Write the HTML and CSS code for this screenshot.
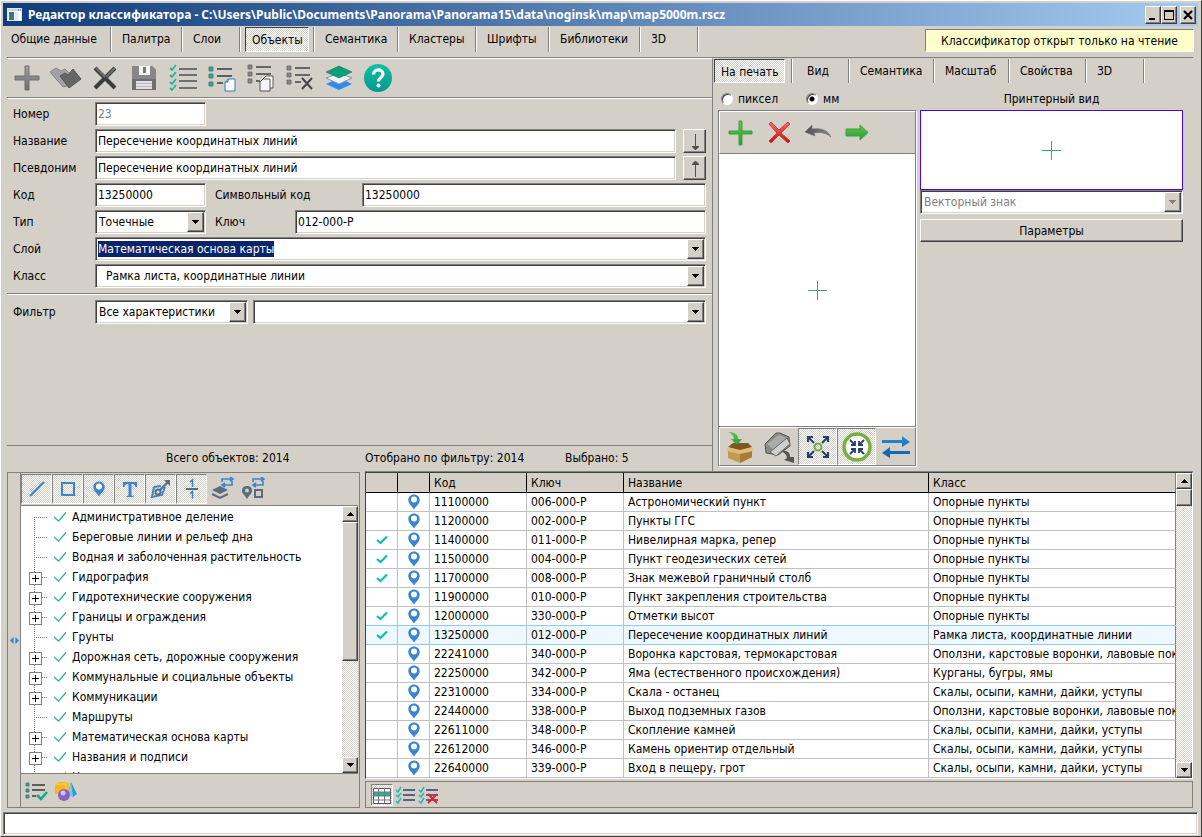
FILE: index.html
```html
<!DOCTYPE html>
<html lang="ru">
<head>
<meta charset="utf-8">
<title>Редактор классификатора</title>
<link rel="stylesheet" href="styles.css">
<script src="main.js" defer></script>
</head>
<body>
<svg class="defs" aria-hidden="true">
  <defs>
    <linearGradient id="gGreen" x1="0" y1="0" x2="0" y2="1"><stop offset="0" stop-color="#62c258"/><stop offset="1" stop-color="#2f9a35"/></linearGradient>
    <linearGradient id="gRed" x1="0" y1="0" x2="0" y2="1"><stop offset="0" stop-color="#f4716c"/><stop offset="1" stop-color="#c00d12"/></linearGradient>
    <linearGradient id="gGray" x1="0" y1="0" x2="0" y2="1"><stop offset="0" stop-color="#a0a0a0"/><stop offset="1" stop-color="#6c6c6c"/></linearGradient>
    <linearGradient id="gDark" x1="0" y1="0" x2="1" y2="0"><stop offset="0" stop-color="#505050"/><stop offset="1" stop-color="#888"/></linearGradient>
    <linearGradient id="gTeal" x1="0" y1="0" x2="0" y2="1"><stop offset="0" stop-color="#10c0a8"/><stop offset="1" stop-color="#04988f"/></linearGradient>
    <linearGradient id="gBlue" x1="0" y1="0" x2="0" y2="1"><stop offset="0" stop-color="#2a8ad8"/><stop offset="1" stop-color="#0b5ea8"/></linearGradient>
    <symbol id="arrowDown" viewBox="0 0 7 4"><path d="M0 0h7v1h-1v1h-1v1h-1v1h-1v-1h-1v-1h-1v-1h-1z"/></symbol>
    <symbol id="arrowUp" viewBox="0 0 7 4"><path d="M0 4h7v-1h-1v-1h-1v-1h-1v-1h-1v1h-1v1h-1v1h-1z"/></symbol>
    <symbol id="pin" viewBox="0 0 12 16"><path d="M6 .5C3 .5.3 2.800.3 6c0 2.600 1.700 4.400 3.200 6.300C4.500 13.500 5.200 14.300 6 15.600c.8-1.300 1.500-2.100 2.500-3.300 1.500-1.900 3.200-3.700 3.200-6.300C11.700 2.800 9 .5 6 .5z" fill="#3a84d0"/><circle cx="6" cy="5.500" r="3" fill="#fff"/></symbol>
    <symbol id="tick" viewBox="0 0 12 10"><path d="M1 5l3.500 3L11 1.500" fill="none" stroke="#0fbfa5" stroke-width="2.200"/></symbol>
    <symbol id="thinTick" viewBox="0 0 14 12"><path d="M1 6l4.500 4L13 1.500" fill="none" stroke="#3fb595" stroke-width="1.400"/></symbol>
  </defs>
</svg>

<div class="window">
  <header class="titlebar">
    <svg class="app-icon" viewBox="0 0 16 16"><rect x=".5" y="1.500" width="14" height="12" fill="#fff" stroke="#dfe6ee"/><rect x="1" y="2" width="13" height="2" fill="#c8d4e0"/><rect x="2" y="5" width="5" height="8" fill="#2a8a68"/><path d="M2 5h5v4l-5 3z" fill="#366fa0"/><rect x="8" y="5" width="3" height="8" fill="#e6e6e6"/><path d="M11 3h1M13 3h1" stroke="#555"/></svg>
    <h1 class="title">Редактор классификатора - C:\Users\Public\Documents\Panorama\Panorama15\data\noginsk\map\map5000m.rscz</h1>
    <div class="win-buttons">
      <button class="raised win-btn" aria-label="Свернуть"><svg viewBox="0 0 12 10"><path d="M2 8h6v2H2z"/></svg></button>
      <button class="raised win-btn" aria-label="Развернуть"><svg viewBox="0 0 12 10"><path d="M1 0h10v10H1zM2 2v7h8V2z" fill-rule="evenodd"/></svg></button>
      <button class="raised win-btn win-close" aria-label="Закрыть"><svg viewBox="0 0 12 10"><path d="M2 1l8 8M10 1l-8 8" stroke="#000" stroke-width="2"/></svg></button>
    </div>
  </header>

  <div class="navbar">
    <nav class="tabs main-tabs">
      <button class="tab">Общие данные</button>
      <button class="tab">Палитра</button>
      <button class="tab">Слои</button>
      <button class="tab active"><span class="pressed">Объекты</span></button>
      <button class="tab">Семантика</button>
      <button class="tab">Кластеры</button>
      <button class="tab">Шрифты</button>
      <button class="tab">Библиотеки</button>
      <button class="tab">3D</button>
    </nav>
    <div class="notice">Классификатор открыт только на чтение</div>
  </div>

  <main class="main">
    <section class="upper">
      <div class="editor">
        <div class="toolbar">
          <button class="tool" aria-label="Добавить"><svg viewBox="0 0 30 30"><path d="M13 3h4v10h10v4H17v10h-4V17H3v-4h10z" fill="url(#gGray)" stroke="#707070"/></svg></button>
          <button class="tool" aria-label="Копировать"><svg class="wide" viewBox="0 0 34 30"><path d="M1 9l6-4 5 3 4-2 8 8-6 9-4 1z" fill="#a2a2a2" stroke="#858585"/><path d="M11 13l5-3 3 2 5-6 8 10-12 9z" fill="#666" stroke="#555"/></svg></button>
          <button class="tool" aria-label="Удалить"><svg viewBox="0 0 30 30"><path d="M5 5l20 20M25 5L5 25" stroke="#3c3c3c" stroke-width="4"/><path d="M6 5l9 9M25 5l-9 9" stroke="#707070" stroke-width="2"/></svg></button>
          <button class="tool" aria-label="Сохранить"><svg viewBox="0 0 30 30"><path d="M3 3h20l4 4v20H3z" fill="#6f6f6f"/><path d="M3 3h20l4 4v9H3z" fill="#878787"/><path d="M10 3h11v9H10z" fill="#f4f4f4"/><path d="M14 4h3v6h-3z" fill="#777"/><path d="M7 18h16v8H7z" fill="#e2e2e2"/><path d="M7 20h16v1H7zM7 23h16v1H7z" fill="#bbb"/></svg></button>
          <button class="tool" aria-label="Отметить список"><svg viewBox="0 0 30 30"><path d="M2 5l2 2 4-5M2 12l2 2 4-5M2 19l2 2 4-5M2 25l2 2 4-5" fill="none" stroke="#24b594" stroke-width="1.800"/><path d="M11 6h18M11 12h18M11 18h18M11 25h18" stroke="#6c7075" stroke-width="2"/></svg></button>
          <button class="tool" aria-label="Список объектов"><svg viewBox="0 0 30 30"><path d="M2 4h4v4H2zM2 11h4v4H2zM2 19h4v4H2z" fill="#18b89a" stroke="#56636a" stroke-width=".8"/><path d="M10 6h15M10 13h15M10 20h6" stroke="#5a5f64" stroke-width="2"/><path d="M21 16h7v12h-10v-9z" fill="#f8fbff" stroke="#3e74b4"/><path d="M21 16v3h-3" fill="#9cc4ec" stroke="#3e74b4"/></svg></button>
          <button class="tool" aria-label="Копировать список"><svg viewBox="0 0 30 30"><path d="M2 2h4v4H2zM2 9h4v4H2zM2 16h4v4H2z" fill="#888" stroke="#666" stroke-width=".8"/><path d="M10 4h15M10 11h15M10 18h4" stroke="#666" stroke-width="2"/><path d="M20 13h7v12H17v-9z" fill="#fff" stroke="#555"/><path d="M17 16h7v12H14v-9z" fill="#f4f4f4" stroke="#555"/></svg></button>
          <button class="tool" aria-label="Очистить список"><svg viewBox="0 0 30 30"><path d="M2 3h4v4H2zM2 10h4v4H2zM2 17h4v4H2z" fill="#888" stroke="#666" stroke-width=".8"/><path d="M10 5h15M10 12h15M10 19h6" stroke="#666" stroke-width="2"/><path d="M17 15l10 11M27 15L17 26" stroke="#444" stroke-width="2"/></svg></button>
          <button class="tool" aria-label="Слои"><svg viewBox="0 0 30 30"><path d="M2 21l13-6 13 6-13 6z" fill="#2c8cf0"/><path d="M2 15l13-5 13 5-13 6z" fill="#eef1f2" stroke="#8a9499"/><path d="M2 9l13-6 13 6-13 6z" fill="#0d9f78" stroke="#1a7a62" stroke-width=".6"/></svg></button>
          <button class="tool" aria-label="Справка"><svg viewBox="0 0 30 30"><circle cx="15" cy="15" r="14" fill="url(#gTeal)"/><path d="M10.500 11.500c0-6 9.500-6 9.500-.5 0 3.500-4.500 3.500-4.500 7.500" fill="none" stroke="#fff" stroke-width="3.200"/><circle cx="15.500" cy="22.500" r="2" fill="#fff"/></svg></button>
        </div>

        <form class="form">
          <div class="row"><label class="name" for="fNum">Номер</label><input id="fNum" class="field code" value="23" disabled></div>
          <div class="row"><label class="name" for="fName">Название</label><input id="fName" class="field grow" value="Пересечение координатных линий"><button type="button" class="raised copy-btn" aria-label="Вниз"><svg viewBox="0 0 12 20"><path d="M6.500 3v13" stroke="#505050"/><path d="M3 15h7v1l-3 3H6l-3-3z" fill="#505050"/></svg></button></div>
          <div class="row"><label class="name" for="fAlias">Псевдоним</label><input id="fAlias" class="field grow" value="Пересечение координатных линий"><button type="button" class="raised copy-btn" aria-label="Вверх"><svg viewBox="0 0 12 20"><path d="M6.500 5v14" stroke="#505050"/><path d="M3 7h7V6L7 3H6L3 6z" fill="#505050"/></svg></button></div>
          <div class="row"><label class="name" for="fCode">Код</label><input id="fCode" class="field code" value="13250000"><label class="second long" for="fSym">Символьный код</label><input id="fSym" class="field grow" value="13250000"></div>
          <div class="row"><label class="name" for="fType">Тип</label><span class="combo code"><select id="fType"><option>Точечные</option></select><span class="raised drop"><svg><use href="#arrowDown"/></svg></span></span><label class="second" for="fKey">Ключ</label><input id="fKey" class="field grow" value="012-000-P"></div>
          <div class="row"><label class="name" for="fLayer">Слой</label><span class="combo grow"><input id="fLayer" value="Математическая основа карты"><span class="raised drop"><svg><use href="#arrowDown"/></svg></span></span></div>
          <div class="row"><label class="name" for="fClass">Класс</label><span class="combo grow indent"><select id="fClass"><option>Рамка листа, координатные линии</option></select><span class="raised drop"><svg><use href="#arrowDown"/></svg></span></span></div>
        </form>
        <div class="filter row">
          <label class="name" for="fFilter">Фильтр</label>
          <span class="combo filter-kind"><select id="fFilter"><option>Все характеристики</option></select><span class="raised drop"><svg><use href="#arrowDown"/></svg></span></span>
          <span class="combo grow"><input aria-label="Текст фильтра"><span class="raised drop"><svg><use href="#arrowDown"/></svg></span></span>
        </div>
        <div class="counts"><span class="total">Всего объектов: 2014</span><span class="filtered">Отобрано по фильтру: 2014</span><span>Выбрано: 5</span></div>
      </div>

      <div class="view">
        <nav class="tabs view-tabs">
          <button class="tab active"><span class="pressed">На печать</span></button>
          <button class="tab">Вид</button>
          <button class="tab">Семантика</button>
          <button class="tab">Масштаб</button>
          <button class="tab">Свойства</button>
          <button class="tab">3D</button>
        </nav>
        <div class="view-body">
          <div class="sketch-col">
            <div class="units">
              <label class="unit"><input type="radio" name="unit">пиксел</label>
              <label class="unit"><input type="radio" name="unit" checked>мм</label>
            </div>
            <div class="sketch">
              <div class="sketch-top">
                <button class="tool" aria-label="Добавить знак"><svg viewBox="0 0 30 30"><path d="M14 3h3v10h10v3H17v11h-3V16H4v-3h10z" fill="url(#gGreen)" stroke="#3ba33c"/></svg></button>
                <button class="tool" aria-label="Удалить знак"><svg viewBox="0 0 30 30"><path d="M5 6l2-2 8 8 9-8 2 2-9 9 9 8-2 2-9-8-8 8-2-2 8-8z" fill="url(#gRed)" stroke="#c93a36"/></svg></button>
                <button class="tool" aria-label="Отменить"><svg viewBox="0 0 30 30"><path d="M2 14l7-7v4c8-1 15 0 19 8-6-5-12-5-17-4l1 3z" fill="url(#gDark)" stroke="#666" stroke-width=".5"/></svg></button>
                <button class="tool" aria-label="Далее"><svg viewBox="0 0 30 30"><path d="M4 11h14V7l8 7.500-8 7.500v-4H4z" fill="url(#gGreen)" stroke="#3ba33c"/></svg></button>
              </div>
              <div class="canvas"><svg viewBox="0 0 19 19"><path d="M9.500 0v19M0 9.500h19" stroke="#2ba591"/></svg></div>
              <div class="sketch-bottom">
                <button class="tool" aria-label="Загрузить"><svg class="tall" viewBox="0 0 30 34"><path d="M3 17h24v10l-12 6L3 28z" fill="#c39a52"/><path d="M15 21l12-4v10l-12 6z" fill="#a57c38"/><path d="M3 17l5-4h15l4 4-12 4z" fill="#7c5820"/><path d="M3 17l12 3v4L2 21zM27 17l-12 3v4l13-3z" fill="#e0bd7a"/><path d="M3 2c8 0 10 3 10 7h4l-5 6-6-6h3c0-3-2-5-6-7z" fill="url(#gGreen)"/></svg></button>
                <button class="tool" aria-label="Выгрузить"><svg class="wide tall" viewBox="0 0 34 34"><path d="M3 14l11-11h4l9 4 1 9-12 9-12-2z" fill="#8a8a8a" stroke="#555"/><path d="M5 14l12-9 8 3-13 12z" fill="#aaa"/><path d="M8 22l17-14 3 6-14 12z" fill="#cfcfcf" stroke="#666"/><path d="M19 21c6-1 9 1 9 6h4v6l-10-3 3-2c0-3-2-5-6-7z" fill="#555"/></svg></button>
                <button class="tool on" aria-label="Увеличить"><svg viewBox="0 0 30 30"><circle cx="15" cy="15" r="3.500" fill="none" stroke="#6fae3b" stroke-width="2"/><path d="M11 11L5 5M19 11l6-6M11 19l-6 6M19 19l6 6" stroke="#23406e" stroke-width="2"/><path d="M5 10V5h5M20 5h5v5M5 20v5h5M25 20v5h-5" fill="none" stroke="#23406e" stroke-width="2.200"/></svg></button>
                <button class="tool on" aria-label="Вписать"><svg viewBox="0 0 30 30"><circle cx="15" cy="15" r="13" fill="#fff" stroke="#76b043" stroke-width="3.500"/><path d="M8 8l5 5M22 8l-5 5M8 22l5-5M22 22l-5-5" stroke="#23406e" stroke-width="1.800"/><path d="M9 13h4V9M21 13h-4V9M9 17h4v4M21 17h-4v4" fill="none" stroke="#23406e" stroke-width="1.800"/></svg></button>
                <button class="tool" aria-label="Заменить"><svg viewBox="0 0 30 30"><path d="M1 8h20V4l8 6-8 5v-4H1zM29 19H9v-4l-8 6 8 5v-4h20z" fill="url(#gBlue)"/></svg></button>
              </div>
            </div>
          </div>
          <div class="preview-col">
            <div class="preview-title">Принтерный вид</div>
            <div class="preview"><svg viewBox="0 0 19 19"><path d="M9.500 0v19M0 9.500h19" stroke="#2ba591"/></svg></div>
            <span class="combo muted"><select aria-label="Вид знака" disabled><option>Векторный знак</option></select><span class="raised drop"><svg><use href="#arrowDown"/></svg></span></span>
            <button class="raised params">Параметры</button>
          </div>
        </div>
      </div>
    </section>

    <section class="lower">
      <div class="layers">
        <button class="splitter" aria-label="Свернуть панель"><svg viewBox="0 0 12 10"><path d="M5 1v8L1 5zM7 1v8l4-4z" fill="#2f86d8"/></svg></button>
        <div class="layers-body">
          <div class="kinds">
            <button class="kind on" aria-label="Линейные"><svg viewBox="0 0 24 24"><path d="M5 19L19 5" stroke="#3a84d0" stroke-width="2.200"/></svg></button>
            <button class="kind on" aria-label="Площадные"><svg viewBox="0 0 24 24"><path d="M6 6h12v12H6z" fill="none" stroke="#3a84d0" stroke-width="2"/></svg></button>
            <button class="kind on" aria-label="Точечные"><svg class="pin-big"><use href="#pin"/></svg></button>
            <button class="kind on" aria-label="Подписи"><svg viewBox="0 0 24 24"><path d="M5 5h14v5h-1.500c-.3-2-1-3-3.500-3h-.5v11c0 .8.6 1 2 1v1H8.500v-1c1.400 0 2-.2 2-1V7H10c-2.500 0-3.200 1-3.500 3H5z" fill="#3a84d0"/></svg></button>
            <button class="kind on" aria-label="Векторные"><svg viewBox="0 0 24 24"><path d="M5 10l7-1M5 10L3 20l10-2 3-8" fill="none" stroke="#3a84d0" stroke-width="2"/><circle cx="9" cy="15" r="2.500" fill="none" stroke="#5a6b7c" stroke-width="2"/><path d="M11 13l8-8" stroke="#5a6b7c" stroke-width="2"/><path d="M15 3h6v6z" fill="#5a6b7c"/></svg></button>
            <button class="kind on" aria-label="Шаблоны"><svg viewBox="0 0 24 24"><path d="M6 12h12" stroke="#5a6b7c" stroke-width="2"/><path d="M10 5l2.500-2v7M10 16.500l2.500-2v7" fill="none" stroke="#3a84d0" stroke-width="1.600"/></svg></button>
            <button class="kind" aria-label="Порядок слоёв"><svg viewBox="0 0 24 24"><path d="M1 13l8-4 8 4-8 4z" fill="#5a6b7c"/><path d="M1 17l8 4 8-4" fill="none" stroke="#5a6b7c" stroke-width="2"/><path d="M11 5V2h9M19 0l3 2-3 2M21 4v4h-9M14 6l-3 2 3 2" fill="none" stroke="#3a84d0" stroke-width="1.600"/></svg></button>
            <button class="kind" aria-label="Порядок видов"><svg viewBox="0 0 24 24"><path d="M5 9c-3 0-5 2-5 4.500C0 17 3 18 5 22c2-4 5-5 5-8.500C10 11 8 9 5 9z" fill="#5a6b7c"/><circle cx="5" cy="13.500" r="2" fill="#d4d0c8"/><path d="M13 13h7v7h-7z" fill="none" stroke="#5a6b7c" stroke-width="2"/><path d="M11 5V2h9M19 0l3 2-3 2M21 4v4h-9M14 6l-3 2 3 2" fill="none" stroke="#3a84d0" stroke-width="1.600"/></svg></button>
          </div>
          <div class="tree-wrap">
            <ul class="tree">
              <li class="leaf"><svg class="thin"><use href="#thinTick"/></svg>Административное деление</li>
              <li class="leaf"><svg class="thin"><use href="#thinTick"/></svg>Береговые линии и рельеф дна</li>
              <li class="leaf"><svg class="thin"><use href="#thinTick"/></svg>Водная и заболоченная растительность</li>
              <li class="node"><svg class="thin"><use href="#thinTick"/></svg>Гидрография</li>
              <li class="node"><svg class="thin"><use href="#thinTick"/></svg>Гидротехнические сооружения</li>
              <li class="node"><svg class="thin"><use href="#thinTick"/></svg>Границы и ограждения</li>
              <li class="leaf"><svg class="thin"><use href="#thinTick"/></svg>Грунты</li>
              <li class="node"><svg class="thin"><use href="#thinTick"/></svg>Дорожная сеть, дорожные сооружения</li>
              <li class="node"><svg class="thin"><use href="#thinTick"/></svg>Коммунальные и социальные объекты</li>
              <li class="node"><svg class="thin"><use href="#thinTick"/></svg>Коммуникации</li>
              <li class="leaf"><svg class="thin"><use href="#thinTick"/></svg>Маршруты</li>
              <li class="node"><svg class="thin"><use href="#thinTick"/></svg>Математическая основа карты</li>
              <li class="node"><svg class="thin"><use href="#thinTick"/></svg>Названия и подписи</li>
              <li class="leaf"><svg class="thin"><use href="#thinTick"/></svg>Население</li>
            </ul>
            <div class="scroll">
              <button class="raised scroll-btn" aria-label="Вверх"><svg><use href="#arrowUp"/></svg></button>
              <div class="raised thumb tree-thumb"></div>
              <button class="raised scroll-btn scroll-end" aria-label="Вниз"><svg><use href="#arrowDown"/></svg></button>
            </div>
          </div>
          <div class="layer-tools">
            <button class="plain" aria-label="Отметить слои"><svg viewBox="0 0 24 24"><path d="M2 4h3v3H2zM2 10h3v3H2zM2 16h3v3H2z" fill="#18b89a" stroke="#56636a" stroke-width=".8"/><path d="M8 6h13M8 11h13M8 17h4" stroke="#5a5f64" stroke-width="2"/><path d="M13 16l4 4 6-7" fill="none" stroke="#12a98c" stroke-width="2.600"/></svg></button>
            <button class="plain" aria-label="Виды объектов"><svg viewBox="0 0 24 24"><path d="M1 5l4-2h8l2 2v8l-4 2H1z" fill="#f7b521"/><path d="M1 5h11v10" fill="none" stroke="#fbd77a"/><path d="M17 3l6 12-4 3-5-3z" fill="#2f9cd6"/><path d="M17 3l2 15-5-3z" fill="#7cc8ee"/><circle cx="10" cy="16" r="6" fill="#8a62c4"/><circle cx="9" cy="14" r="2.500" fill="#d6c2f2"/></svg></button>
          </div>
        </div>
      </div>

      <div class="objects">
        <div class="grid-wrap">
          <div class="grid-view">
            <table class="grid">
              <colgroup><col class="c-mark"><col class="c-kind"><col class="c-code"><col class="c-code"><col class="c-name"><col></colgroup>
              <thead><tr><th></th><th></th><th>Код</th><th>Ключ</th><th>Название</th><th>Класс</th></tr></thead>
              <tbody>
                <tr><td></td><td><svg class="pin"><use href="#pin"/></svg></td><td>11100000</td><td>006-000-P</td><td>Астрономический пункт</td><td>Опорные пункты</td></tr>
                <tr><td></td><td><svg class="pin"><use href="#pin"/></svg></td><td>11200000</td><td>002-000-P</td><td>Пункты ГГС</td><td>Опорные пункты</td></tr>
                <tr><td><svg class="tick"><use href="#tick"/></svg></td><td><svg class="pin"><use href="#pin"/></svg></td><td>11400000</td><td>011-000-P</td><td>Нивелирная марка, репер</td><td>Опорные пункты</td></tr>
                <tr><td><svg class="tick"><use href="#tick"/></svg></td><td><svg class="pin"><use href="#pin"/></svg></td><td>11500000</td><td>004-000-P</td><td>Пункт геодезических сетей</td><td>Опорные пункты</td></tr>
                <tr><td><svg class="tick"><use href="#tick"/></svg></td><td><svg class="pin"><use href="#pin"/></svg></td><td>11700000</td><td>008-000-P</td><td>Знак межевой граничный столб</td><td>Опорные пункты</td></tr>
                <tr><td></td><td><svg class="pin"><use href="#pin"/></svg></td><td>11900000</td><td>010-000-P</td><td>Пункт закрепления строительства</td><td>Опорные пункты</td></tr>
                <tr><td><svg class="tick"><use href="#tick"/></svg></td><td><svg class="pin"><use href="#pin"/></svg></td><td>12000000</td><td>330-000-P</td><td>Отметки высот</td><td>Опорные пункты</td></tr>
                <tr class="current"><td><svg class="tick"><use href="#tick"/></svg></td><td><svg class="pin"><use href="#pin"/></svg></td><td>13250000</td><td>012-000-P</td><td>Пересечение координатных линий</td><td>Рамка листа, координатные линии</td></tr>
                <tr><td></td><td><svg class="pin"><use href="#pin"/></svg></td><td>22241000</td><td>340-000-P</td><td>Воронка карстовая, термокарстовая</td><td>Оползни, карстовые воронки, лавовые покровы</td></tr>
                <tr><td></td><td><svg class="pin"><use href="#pin"/></svg></td><td>22250000</td><td>342-000-P</td><td>Яма (естественного происхождения)</td><td>Курганы, бугры, ямы</td></tr>
                <tr><td></td><td><svg class="pin"><use href="#pin"/></svg></td><td>22310000</td><td>334-000-P</td><td>Скала - останец</td><td>Скалы, осыпи, камни, дайки, уступы</td></tr>
                <tr><td></td><td><svg class="pin"><use href="#pin"/></svg></td><td>22440000</td><td>338-000-P</td><td>Выход подземных газов</td><td>Оползни, карстовые воронки, лавовые покровы</td></tr>
                <tr><td></td><td><svg class="pin"><use href="#pin"/></svg></td><td>22611000</td><td>348-000-P</td><td>Скопление камней</td><td>Скалы, осыпи, камни, дайки, уступы</td></tr>
                <tr><td></td><td><svg class="pin"><use href="#pin"/></svg></td><td>22612000</td><td>346-000-P</td><td>Камень ориентир отдельный</td><td>Скалы, осыпи, камни, дайки, уступы</td></tr>
                <tr><td></td><td><svg class="pin"><use href="#pin"/></svg></td><td>22640000</td><td>339-000-P</td><td>Вход в пещеру, грот</td><td>Скалы, осыпи, камни, дайки, уступы</td></tr>
              </tbody>
            </table>
          </div>
          <div class="scroll">
            <button class="raised scroll-btn" aria-label="Вверх"><svg><use href="#arrowUp"/></svg></button>
            <div class="raised thumb"></div>
            <button class="raised scroll-btn scroll-end" aria-label="Вниз"><svg><use href="#arrowDown"/></svg></button>
          </div>
        </div>
        <div class="grid-tools">
          <button class="mini on" aria-label="Таблица"><svg viewBox="0 0 20 20"><path d="M1.500 3.500h17v15h-17z" fill="#fff" stroke="#555"/><path d="M2 7h16v4H2z" fill="#18b89a"/><path d="M1 7h18M1 11h18M1 15h18M6.500 3v15M12.500 3v15" stroke="#777"/></svg></button>
          <button class="mini" aria-label="Отметить все"><svg viewBox="0 0 20 20"><path d="M1 5l2 2 3-5M1 10l2 2 3-4M1 16l2 2 3-5" fill="none" stroke="#24b8b0" stroke-width="1.500"/><path d="M8 5h12M8 10h12M8 15h12" stroke="#5d6184" stroke-width="2"/></svg></button>
          <button class="mini" aria-label="Снять отметки"><svg viewBox="0 0 20 20"><path d="M1 5l2 2 3-5M1 10l2 2 3-4M1 16l2 2 3-5" fill="none" stroke="#24b8b0" stroke-width="1.500"/><path d="M8 5h12M8 10h12M8 15h12" stroke="#5d6184" stroke-width="2"/><path d="M10 9l9 9M19 9l-9 9" stroke="#e02038" stroke-width="2"/></svg></button>
        </div>
      </div>
    </section>
  </main>
  <footer class="statusbar"></footer>
</div>
</body>
</html>
```

FILE: styles.css
```css
* { box-sizing: border-box; }

:root {
  --face: #d4d0c8;
  --shade: #808080;
  --dark: #404040;
  --hatch: repeating-conic-gradient(#fff 0 25%, #d4d0c8 0 50%) 0 0 / 2px 2px;
}

body {
  margin: 0;
  font: 12px/16px "DejaVu Sans Condensed", "Noto Sans", sans-serif;
  color: #000;
  background: var(--face);
}

button, input, select {
  font: inherit;
  color: inherit;
  margin: 0;
  padding: 0;
  border: 0;
  border-radius: 0;
  background: none;
  outline: none;
}

svg { display: block; fill: currentColor; }
.defs { position: absolute; width: 0; height: 0; }

.raised {
  background: var(--face);
  border: 1px solid;
  border-color: #fff var(--dark) var(--dark) #fff;
  box-shadow: inset -1px -1px var(--shade);
}

.window {
  display: flex;
  flex-direction: column;
  height: 100vh;
  padding: 2px 3px 1px 2px;
  border: 1px solid;
  border-color: #fff var(--dark) var(--dark) #fff;
  overflow: hidden;
}

.titlebar {
  display: flex;
  align-items: center;
  gap: 5px;
  height: 23px;
  flex: none;
  padding: 0 2px 0 4px;
  background: linear-gradient(to right, #103c7a, #a6caf0);
  color: #fff;
}
.app-icon { width: 16px; height: 16px; }
.title { flex: 1; margin: 0; font-family: "Noto Sans", sans-serif; font-size: 12px; font-weight: bold; white-space: nowrap; }
.win-buttons { display: flex; color: #000; }
.win-btn { display: grid; place-items: center; width: 16px; height: 18px; }
.win-btn svg { width: 12px; height: 10px; }
.win-close { margin-left: 3px; }

.navbar {
  display: flex;
  justify-content: space-between;
  align-items: flex-start;
  height: 31px;
  flex: none;
  padding: 1px 4px 0 1px;
}
.tabs { display: grid; height: 25px; }
.main-tabs { grid-template-columns: 108px 71px 58px 74px 84px 78px 73px 91px 58px; }
.view-tabs { grid-template-columns: 79px 57px 85px 75px 77px 58px; }
.tab {
  display: flex;
  align-items: center;
  padding: 0 0 2px 10px;
  border-right: 1px solid #fff;
  box-shadow: inset -1px 0 var(--shade);
  white-space: nowrap;
}
.main-tabs .tab:first-child { padding-left: 7px; }
.view-tabs .tab { padding-bottom: 0; }
.main-tabs .tab.active { padding: 0 0 0 4px; align-items: stretch; }
.view-tabs .tab.active { padding-left: 0; align-items: stretch; }
.view-tabs .tab:nth-child(2) { padding-left: 14px; }
.pressed {
  display: flex;
  align-items: center;
  padding: 1px 5px 0 6px;
  background: var(--hatch);
  border: 1px solid;
  border-color: var(--dark) #fff #fff var(--dark);
}
.notice {
  min-width: 269px;
  margin-top: 2px;
  padding: 3px 12px 2px;
  text-align: center;
  background: #ffffcc;
  border: 1px solid;
  border-color: var(--shade) #fff #fff var(--shade);
}

.main { flex: 1; min-height: 0; display: flex; flex-direction: column; padding: 0 5px 0 4px; }
.upper { display: flex; flex: none; border-top: 1px solid var(--shade); }
.editor {
  flex: 1;
  min-width: 0;
  display: flex;
  flex-direction: column;
  border-top: 1px solid #fff;
  border-right: 1px solid var(--shade);
}
.toolbar { display: flex; height: 39px; border-bottom: 1px solid var(--shade); }
.tool { display: grid; place-items: center; width: 39px; flex: none; }
.tool svg { width: 30px; height: 30px; }
.tool svg.wide { width: 34px; }
.tool svg.tall { height: 34px; }

.form { border-top: 1px solid #fff; border-bottom: 1px solid var(--shade); padding: 3px 6px 5px; display: grid; gap: 3px; }
.row { display: flex; align-items: center; }
.name { width: 82px; flex: none; }
.second { width: 89px; flex: none; padding-left: 9px; }
.second.long { width: 156px; }
.field, .combo {
  height: 24px;
  min-width: 0;
  background: #fff;
  border: 1px solid;
  border-color: var(--shade) #fff #fff var(--shade);
  box-shadow: inset 1px 1px var(--dark), inset -1px -1px var(--face);
}
.field { padding: 0 2px; }
.field:disabled { color: var(--shade); }
.code { width: 111px; flex: none; }
.grow { flex: 1; }
.copy-btn { display: grid; place-items: center; width: 23px; height: 24px; margin-left: 7px; flex: none; }
.copy-btn svg { width: 12px; height: 20px; }
.combo { display: flex; padding: 1px; }
.combo select, .combo input { flex: 1; min-width: 0; appearance: none; padding: 0 2px; opacity: 1; }
.combo input { padding: 0 1px; }
.combo.indent select { padding-left: 9px; }
.combo ::selection { background: #0a246a; color: #fff; }
.drop { display: grid; place-items: center; width: 17px; flex: none; pointer-events: none; }
.drop svg { width: 7px; height: 4px; }
.combo.muted, .combo.muted select { color: var(--shade); }

.filter { border-top: 1px solid #fff; padding: 5px 6px; }
.filter-kind { width: 153px; flex: none; margin-right: 5px; }
.counts {
  display: flex;
  margin-top: auto;
  padding: 4px 0 6px 159px;
  border-top: 1px solid var(--shade);
}
.total { width: 199px; }
.filtered { width: 200px; }

.view { width: 480px; flex: none; padding: 1px 0 5px 1px; }
.view-tabs { height: 24px; }
.view-body { display: flex; gap: 3px; padding: 4px 10px 0 4px; }
.sketch-col { width: 199px; }
.units { display: flex; gap: 28px; height: 23px; align-items: center; padding-left: 3px; }
.unit { display: flex; align-items: center; gap: 5px; }
.unit input {
  appearance: none;
  width: 12px;
  height: 12px;
  border-radius: 50%;
  background: #fff;
  border: 1px solid;
  border-color: var(--shade) #fff #fff var(--shade);
  box-shadow: inset 1px 1px var(--dark);
}
.unit input:checked { background: radial-gradient(circle, #000 0 2px, #fff 3px); }
.sketch { border: 1px solid; border-color: var(--shade) #fff #fff var(--shade); }
.sketch-top { display: flex; height: 43px; border: 1px solid #fff; border-bottom-color: var(--shade); border-right-color: var(--shade); }
.canvas { display: grid; place-items: center; height: 273px; background: #fff; border-right: 1px solid var(--shade); border-bottom: 1px solid var(--shade); }
.canvas svg, .preview svg { width: 19px; height: 19px; }
.sketch-bottom { display: flex; height: 39px; border: 1px solid #fff; border-right-color: var(--shade); border-bottom-color: var(--shade); }
.tool.on, .kind.on, .mini.on {
  background: var(--hatch);
  border: 1px solid;
  border-color: var(--shade) #fff #fff var(--shade);
}
.preview-col { flex: 1; display: flex; flex-direction: column; }
.preview-title { height: 23px; line-height: 24px; text-align: center; }
.preview { display: grid; place-items: center; height: 80px; background: #fff; border: 1px solid #5000f0; }
.params { height: 23px; margin-top: 5px; }

.lower { flex: 1; min-height: 0; display: flex; gap: 5px; }
.layers { width: 353px; flex: none; display: flex; border: 1px solid var(--shade); }
.splitter { width: 13px; flex: none; display: grid; place-items: center; border-right: 1px solid var(--shade); }
.splitter svg { width: 11px; height: 9px; }
.layers-body { flex: 1; min-width: 0; display: flex; flex-direction: column; padding-right: 1px; }
.kinds { display: flex; height: 32px; flex: none; padding-top: 1px; }
.kind { display: grid; place-items: center; width: 31px; height: 30px; }
.kind svg { width: 24px; height: 24px; }
.kind svg.pin-big { width: 12px; height: 16px; }
.tree-wrap { flex: 1; min-height: 0; display: flex; border-top: 1px solid var(--shade); border-bottom: 1px solid var(--shade); background: #fff; }
.tree { flex: 1; margin: 0; padding: 1px 0 0 13px; list-style: none; overflow: hidden; }
.tree li {
  position: relative;
  display: flex;
  align-items: center;
  gap: 5px;
  height: 20px;
  padding-left: 19px;
  white-space: nowrap;
}
.tree li::before {
  content: "";
  position: absolute;
  left: 0;
  top: 0;
  width: 13px;
  height: 20px;
  background:
    repeating-linear-gradient(to right, #808080 0 1px, transparent 1px 2px) 0 10px / 13px 1px no-repeat,
    repeating-linear-gradient(to bottom, #808080 0 1px, transparent 1px 2px) 0 0 / 1px 20px no-repeat;
}
.tree li:first-child::before { background-position: 0 10px, 0 10px; }
.tree .node::after {
  content: "";
  position: absolute;
  left: -5px;
  top: 5px;
  width: 11px;
  height: 11px;
  border: 1px solid var(--shade);
  background:
    linear-gradient(#000, #000) center / 7px 1px no-repeat,
    linear-gradient(#000, #000) center / 1px 7px no-repeat,
    #fff;
}
.thin { width: 14px; height: 12px; flex: none; }
.scroll { width: 16px; flex: none; display: flex; flex-direction: column; background: var(--hatch); }
.scroll-btn { display: grid; place-items: center; height: 16px; flex: none; }
.scroll-btn svg { width: 7px; height: 4px; }
.scroll-end { margin-top: auto; }
.thumb { height: 17px; flex: none; }
.tree-thumb { height: 139px; }
.layer-tools { display: flex; align-items: center; gap: 6px; height: 33px; flex: none; padding-left: 3px; }
.plain svg { width: 24px; height: 24px; }

.objects { flex: 1; min-width: 0; display: flex; flex-direction: column; gap: 2px; }
.grid-wrap {
  flex: 1;
  min-height: 0;
  display: flex;
  background: #fff;
  border: 1px solid;
  border-color: var(--dark) #fff #fff var(--dark);
  box-shadow: 0 -1px var(--shade);
}
.grid-view { flex: 1; min-width: 0; overflow: hidden; }
.grid { width: 100%; table-layout: fixed; border-collapse: separate; border-spacing: 0; }
.c-mark, .c-kind { width: 32px; }
.c-code { width: 97px; }
.c-name { width: 305px; }
.grid th, .grid td {
  height: 19px;
  padding: 0 4px;
  border-right: 1px solid #c0c0c0;
  border-bottom: 1px solid #c0c0c0;
  text-align: left;
  font-weight: normal;
  white-space: nowrap;
  overflow: hidden;
  text-overflow: clip;
}
.grid th { height: 20px; background: var(--face); border-color: #000; }
.grid td:last-child, .grid th:last-child { border-right-color: #808080; }
.grid .current td { background: #f0f8ff; border-bottom-color: #88cdf5; box-shadow: 0 -1px #88cdf5; clip-path: inset(-1px 0 0 0); }
.pin { width: 12px; height: 16px; margin: 0 auto; }
.tick { width: 12px; height: 10px; margin: 0 auto; }
.grid-tools { display: flex; gap: 1px; height: 27px; flex: none; padding: 2px 5px; border: 1px solid var(--shade); }
.mini { display: grid; place-items: center; width: 22px; height: 22px; }
.mini svg { width: 20px; height: 20px; }

.statusbar {
  height: 23px;
  flex: none;
  margin-top: 4px;
  background: #fff;
  border: 1px solid;
  border-color: var(--shade) #fff #fff var(--shade);
  box-shadow: inset 1px 1px var(--dark), inset -1px -1px var(--face);
}
```

FILE: main.js
```js
// The layer field opens with its text selected, ready to be replaced.
const layer = document.getElementById("fLayer");
layer.focus();
layer.select();
```
